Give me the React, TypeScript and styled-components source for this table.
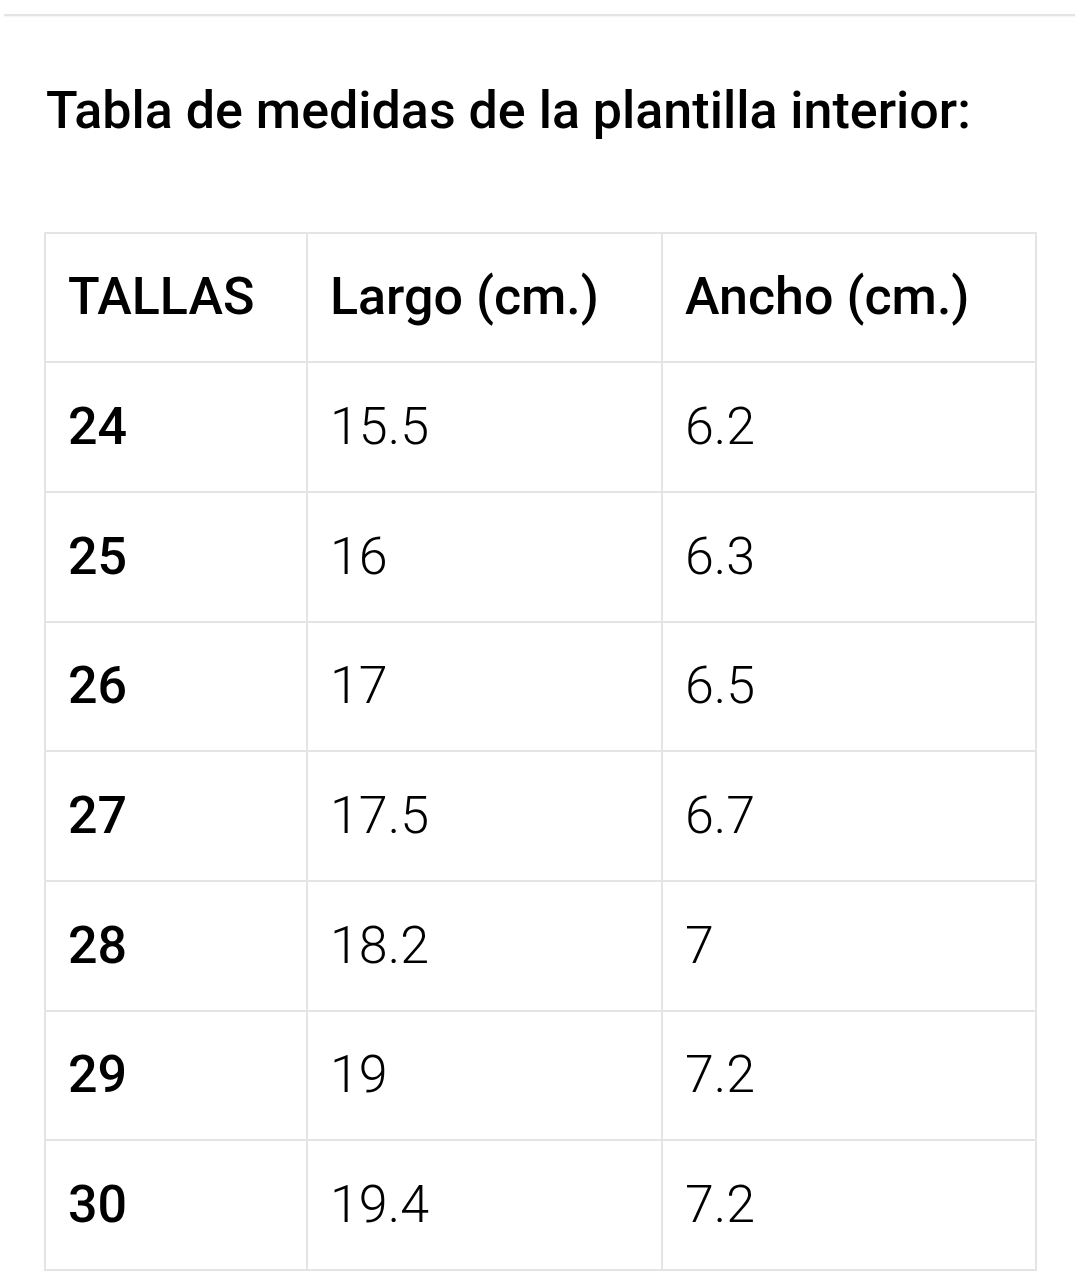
import React from "react";
import styled, { createGlobalStyle } from "styled-components";

const Global = createGlobalStyle`
  html, body { margin: 0; padding: 0; background: #ffffff; }
  body { font-family: Roboto, "Noto Sans", Arial, sans-serif; color: #000; }
`;

const Page = styled.div`
  width: 1080px;
  height: 1271px;
  overflow: hidden;
  display: flex;
  flex-direction: column;
  padding-top: 14px;
  box-sizing: border-box;
`;

const Rule = styled.div`
  margin: 0 5px 0 4px;
  height: 2px;
  background: #e4e4e4;
  box-shadow: 0 1px 2px rgba(0, 0, 0, 0.06);
`;

const Title = styled.h1`
  margin: 65px 0 0 46px;
  font-size: 52px;
  line-height: 60px;
  font-weight: 500;
  letter-spacing: 0;
`;

const Table = styled.table`
  margin: 91px 0 0 44px;
  width: 991px;
  border-collapse: collapse;
  table-layout: fixed;
`;

const Cell = styled.td<{ $kind: "head" | "size" | "value" }>`
  border: 2px solid #e4e4e4;
  height: 127.7px;
  padding: 0 0 0 22px;
  font-size: 52px;
  line-height: 60px;
  vertical-align: middle;
  font-weight: ${(p) => (p.$kind === "value" ? 300 : 500)};
  color: #000;
`;

const rows = [
  ["24", "15.5", "6.2"],
  ["25", "16", "6.3"],
  ["26", "17", "6.5"],
  ["27", "17.5", "6.7"],
  ["28", "18.2", "7"],
  ["29", "19", "7.2"],
  ["30", "19.4", "7.2"],
];

export default function App() {
  return (
    <>
      <Global />
      <Page>
        <Rule />
        <Title>Tabla de medidas de la plantilla interior:</Title>
        <Table>
          <colgroup>
            <col style={{ width: 262 }} />
            <col style={{ width: 355 }} />
            <col style={{ width: 374 }} />
          </colgroup>
          <tbody>
            <tr>
              <Cell $kind="head">TALLAS</Cell>
              <Cell $kind="head">Largo (cm.)</Cell>
              <Cell $kind="head">Ancho (cm.)</Cell>
            </tr>
            {rows.map((r) => (
              <tr key={r[0]}>
                <Cell $kind="size">{r[0]}</Cell>
                <Cell $kind="value">{r[1]}</Cell>
                <Cell $kind="value">{r[2]}</Cell>
              </tr>
            ))}
          </tbody>
        </Table>
      </Page>
    </>
  );
}
